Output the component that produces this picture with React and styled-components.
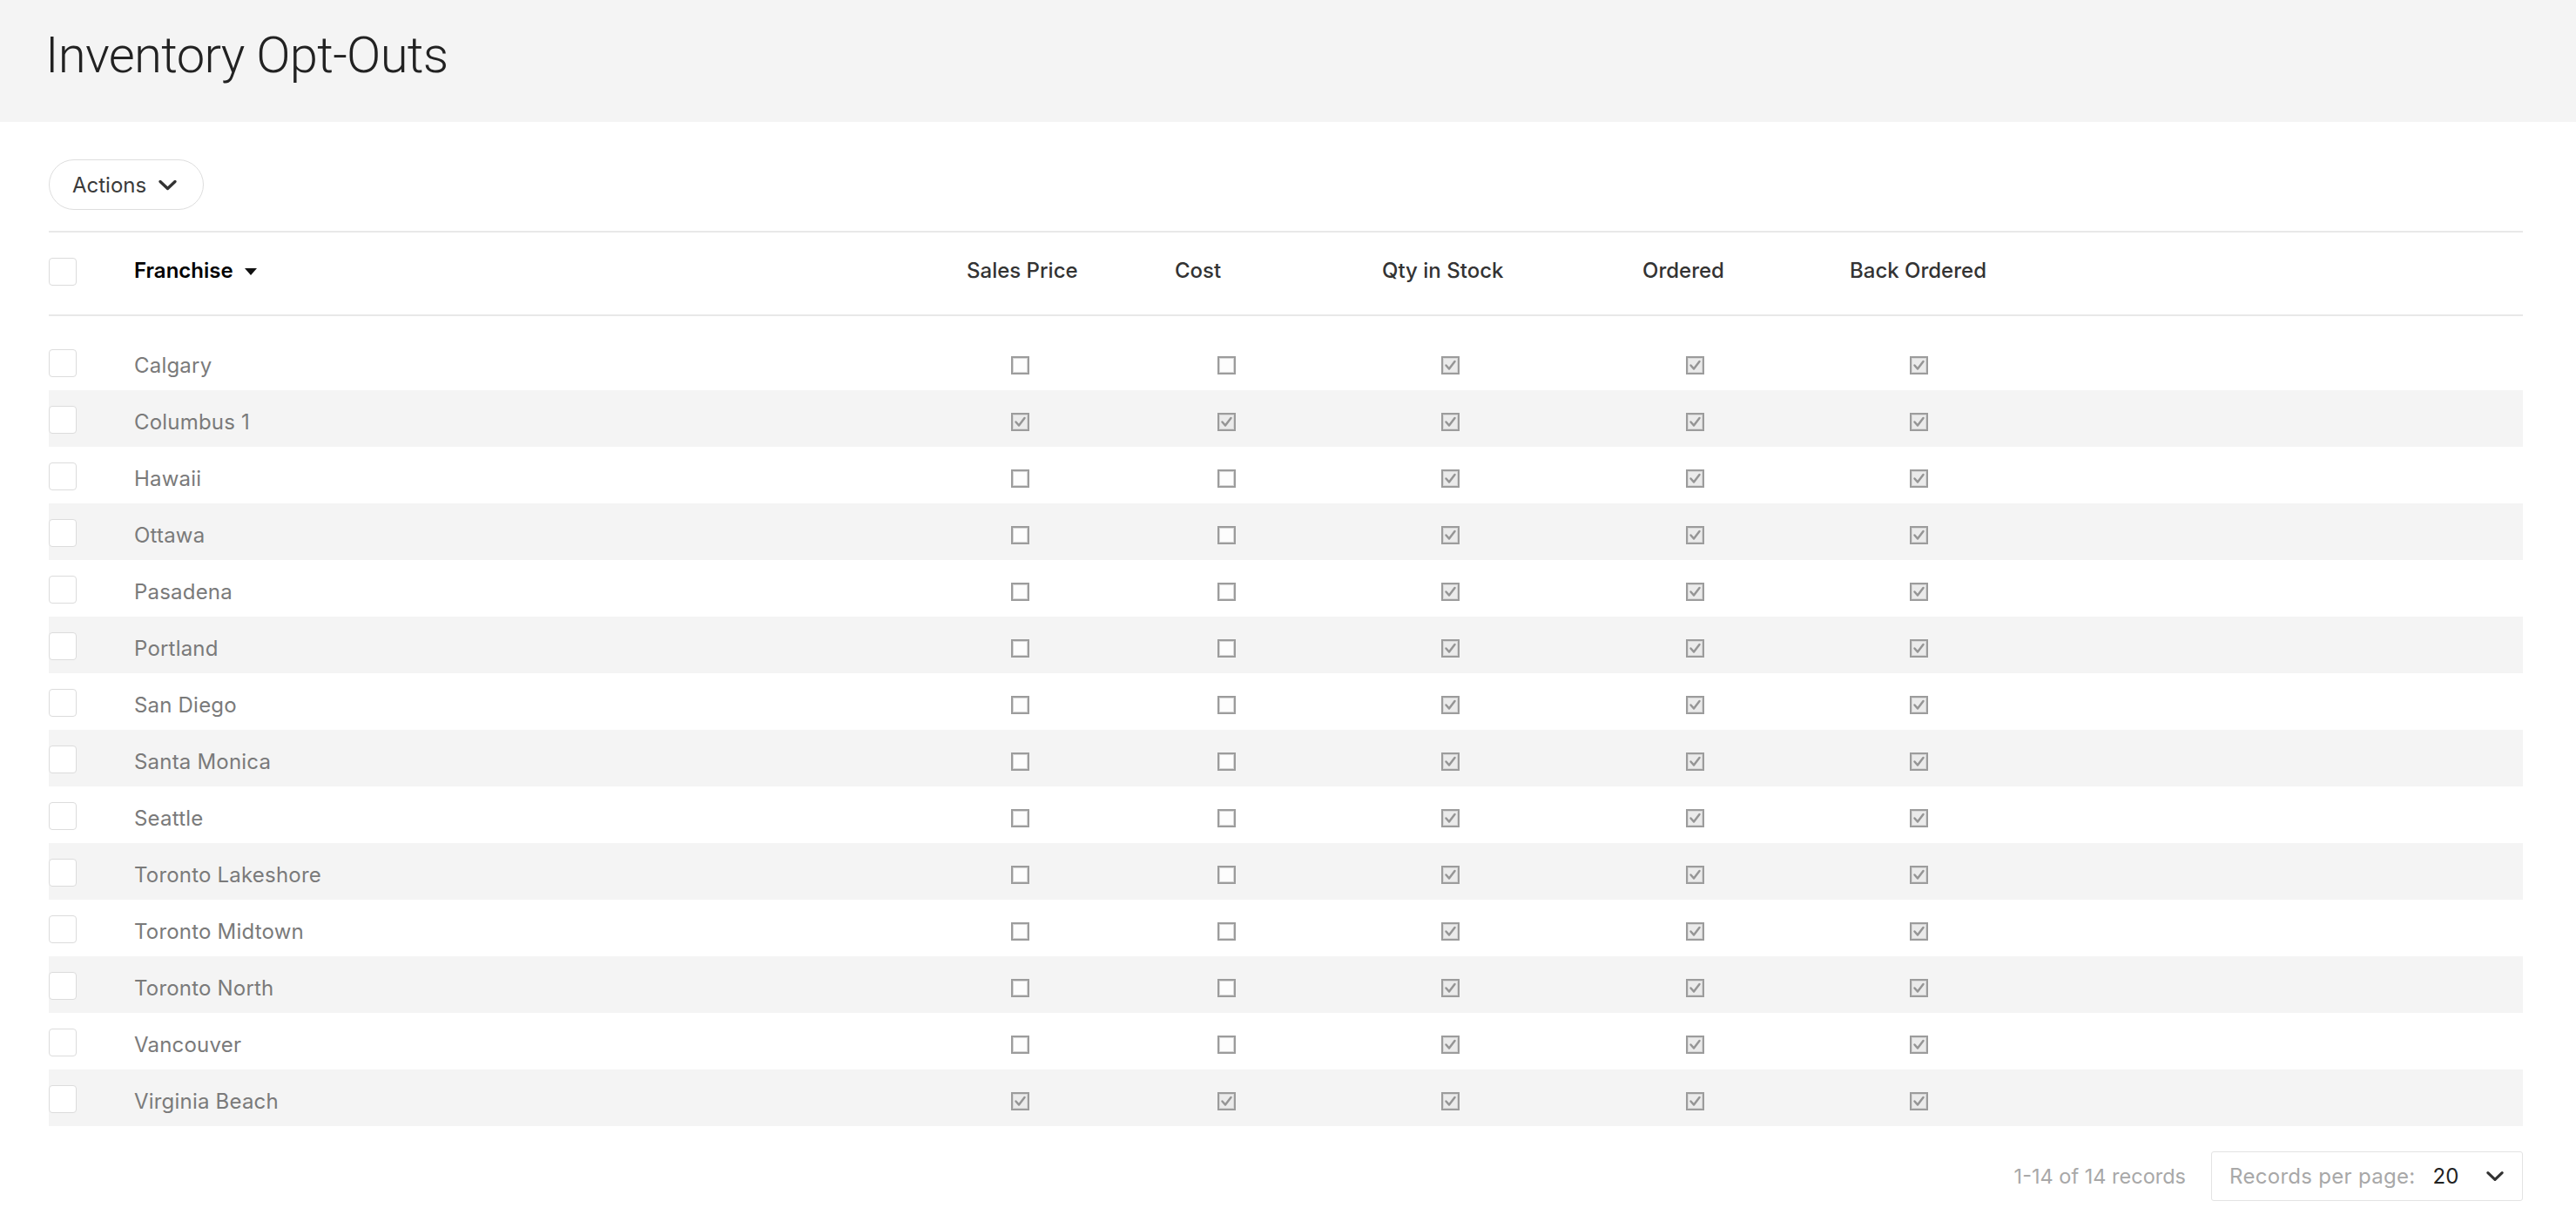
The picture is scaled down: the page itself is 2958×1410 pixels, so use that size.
import React from "react"
import styled, { createGlobalStyle } from "styled-components"

const GlobalStyle = createGlobalStyle`
  html, body {
    margin: 0;
    padding: 0;
    background: #ffffff;
  }
  body {
    font-family: Inter, "Open Sans", "Liberation Sans", sans-serif;
    color: #333;
  }
  * {
    box-sizing: border-box;
  }
`

const franchises = [
  { name: "Calgary", checks: [false, false, true, true, true] },
  { name: "Columbus 1", checks: [true, true, true, true, true] },
  { name: "Hawaii", checks: [false, false, true, true, true] },
  { name: "Ottawa", checks: [false, false, true, true, true] },
  { name: "Pasadena", checks: [false, false, true, true, true] },
  { name: "Portland", checks: [false, false, true, true, true] },
  { name: "San Diego", checks: [false, false, true, true, true] },
  { name: "Santa Monica", checks: [false, false, true, true, true] },
  { name: "Seattle", checks: [false, false, true, true, true] },
  { name: "Toronto Lakeshore", checks: [false, false, true, true, true] },
  { name: "Toronto Midtown", checks: [false, false, true, true, true] },
  { name: "Toronto North", checks: [false, false, true, true, true] },
  { name: "Vancouver", checks: [false, false, true, true, true] },
  { name: "Virginia Beach", checks: [true, true, true, true, true] },
]

// header label + how far the little checkbox sits from the column's left edge
const columns = [
  { label: "Sales Price", offset: 51 },
  { label: "Cost", offset: 49 },
  { label: "Qty in Stock", offset: 68 },
  { label: "Ordered", offset: 50 },
  { label: "Back Ordered", offset: 69 },
]

const Chevron = ({ width = 23 }) => (
  <svg width={width} height="13" viewBox="0 0 23 13" fill="none">
    <polyline
      points="3,2.5 11.5,10.5 20,2.5"
      stroke="#333"
      strokeWidth="3.4"
      strokeLinecap="round"
      strokeLinejoin="round"
    />
  </svg>
)

const OptBox = ({ checked }) => (
  <svg width="21" height="21" viewBox="0 0 21 21">
    <rect
      x="1"
      y="1"
      width="19"
      height="19"
      fill={checked ? "#ebebeb" : "#fdfdfd"}
      stroke="#9c9c9c"
      strokeWidth="2"
    />
    <rect x="2.5" y="2.5" width="16" height="16" fill="none" stroke="#d8d8d8" strokeWidth="1" />
    {checked && (
      <polyline
        points="5.5,10.5 9,14.5 15.5,6"
        fill="none"
        stroke="#959595"
        strokeWidth="2.5"
        strokeLinecap="round"
        strokeLinejoin="round"
      />
    )}
  </svg>
)

const App = () => {
  return (
    <>
      <GlobalStyle />
      <PageHeader>
        <Title>Inventory Opt-Outs</Title>
      </PageHeader>

      <Content>
        <Toolbar>
          <ActionsButton>
            Actions
            <Chevron />
          </ActionsButton>
        </Toolbar>

        <HeadRow>
          <Cell $shift={-2}>
            <RowCheck />
          </Cell>
          <SortLabel>
            Franchise
            <Caret />
          </SortLabel>
          {columns.map((c) => (
            <HeadLabel key={c.label}>{c.label}</HeadLabel>
          ))}
        </HeadRow>

        <Body>
          {franchises.map((f, i) => (
            <Row key={f.name} $striped={i % 2 === 1}>
              <Cell $shift={1}>
                <RowCheck />
              </Cell>
              <Name>{f.name}</Name>
              {f.checks.map((on, j) => (
                <OptCell key={j} $offset={columns[j].offset}>
                  <OptBox checked={on} />
                </OptCell>
              ))}
            </Row>
          ))}
        </Body>

        <Footer>
          <Count>1-14 of 14 records</Count>
          <PerPage>
            <PerPageLabel>Records per page:</PerPageLabel>
            <PerPageValue>20</PerPageValue>
            <Chevron width={22} />
          </PerPage>
        </Footer>
      </Content>
    </>
  )
}

export default App

const PageHeader = styled.header`
  background: #f4f4f4;
  height: 140px;
  padding: 34px 56px 0 52px;
`

const Title = styled.h1`
  margin: 0;
  font-family: Roboto, "Liberation Sans", sans-serif;
  font-weight: 300;
  font-size: 58px;
  line-height: 58px;
  color: #222;
  letter-spacing: -0.7px;
`

const Content = styled.main`
  padding: 0 61px 0 56px;
`

const Toolbar = styled.div`
  display: flex;
  align-items: center;
  padding: 43px 0 24px;
`

const ActionsButton = styled.button`
  display: flex;
  align-items: center;
  gap: 13px;
  height: 58px;
  width: 178px;
  padding: 0 0 0 26px;
  border: 1.5px solid #dedede;
  border-radius: 29px;
  background: #fff;
  font-family: Inter, "Open Sans", sans-serif;
  font-size: 24px;
  color: #3a3a3a;
  cursor: pointer;
`

const grid = `
  display: grid;
  grid-template-columns: 98px 956px 239px 238px 299px 238px 1fr;
  align-items: center;
`

const HeadRow = styled.div`
  ${grid}
  height: 98px;
  border-top: 2px solid #e8e8e8;
  border-bottom: 2px solid #e8e8e8;
`

const Cell = styled.div`
  display: flex;
  align-items: center;
  margin-top: ${(p) => p.$shift * 2}px;
`

const RowCheck = styled.span`
  display: block;
  width: 32px;
  height: 32px;
  border: 1.5px solid #dcdcdc;
  border-radius: 4px;
  background: #fff;
`

const SortLabel = styled.div`
  display: flex;
  align-items: center;
  gap: 13px;
  margin-bottom: 7px;
  font-size: 24px;
  font-weight: 600;
  color: #000;
`

const Caret = styled.span`
  display: block;
  width: 0;
  height: 0;
  margin-top: 3px;
  border-left: 7px solid transparent;
  border-right: 7px solid transparent;
  border-top: 8px solid #111;
`

const HeadLabel = styled.div`
  margin-bottom: 7px;
  font-size: 24px;
  font-weight: 500;
  color: #333;
  white-space: nowrap;
`

const Body = styled.div`
  padding-top: 20px;
`

const Row = styled.div`
  ${grid}
  height: 65px;
  background: ${(p) => (p.$striped ? "#f4f4f4" : "#fff")};
`

const Name = styled.div`
  margin-top: 8px;
  font-size: 24px;
  letter-spacing: 0.2px;
  color: #7a7a7a;
  white-space: nowrap;
`

const OptCell = styled.div`
  display: flex;
  align-items: center;
  margin-top: 8px;
  padding-left: ${(p) => p.$offset}px;
`

const Footer = styled.div`
  display: flex;
  justify-content: flex-end;
  align-items: center;
  gap: 29px;
  padding-top: 29px;
`

const Count = styled.span`
  font-size: 23.5px;
  color: #a8a8a8;
`

const PerPage = styled.div`
  display: flex;
  align-items: center;
  width: 358px;
  height: 57px;
  padding: 0 20px;
  border: 1.5px solid #e3e3e3;
  border-radius: 3px;
`

const PerPageLabel = styled.span`
  font-size: 24px;
  letter-spacing: 0.3px;
  color: #a8a8a8;
`

const PerPageValue = styled.span`
  flex: 1;
  margin-left: 20px;
  font-size: 24px;
  color: #222;
`
